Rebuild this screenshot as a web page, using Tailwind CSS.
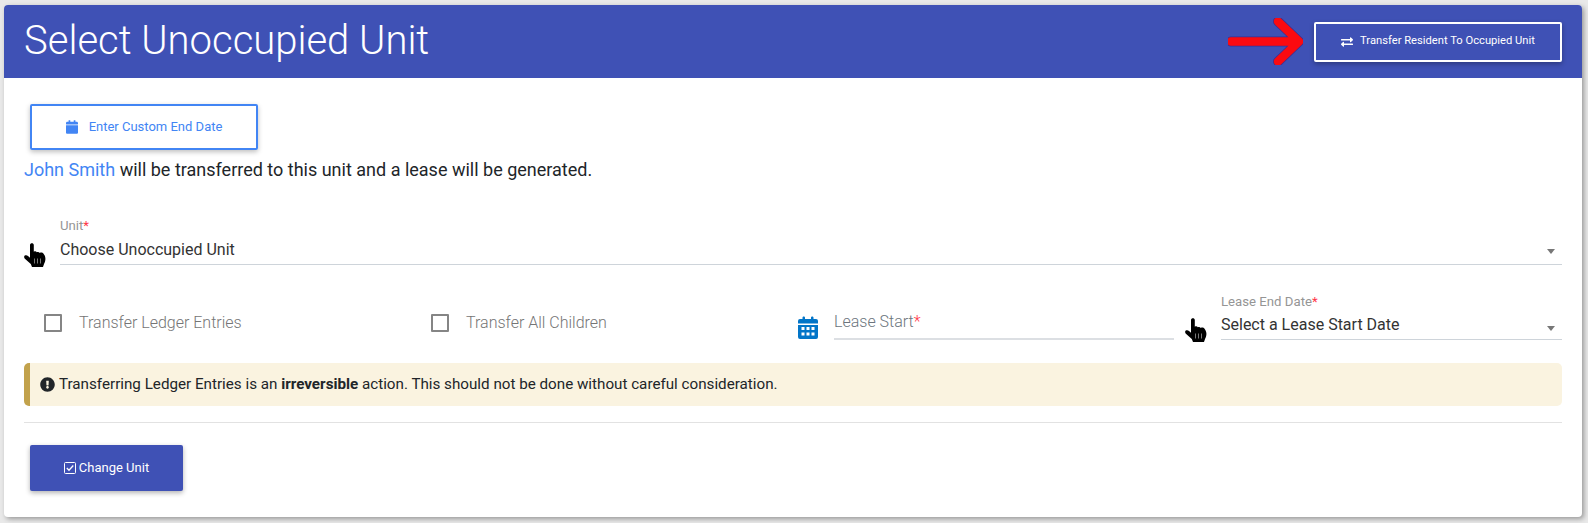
<!DOCTYPE html>
<html lang="en">
<head>
  <meta charset="UTF-8">
  <title>Select Unoccupied Unit</title>
  <script src="https://cdn.jsdelivr.net/npm/@tailwindcss/browser@4"></script>
</head>
<body class="bg-[#e9e9e9] h-[523px] overflow-hidden pt-[5px] pl-1 font-['Roboto',sans-serif]">
  <div class="w-[1578px] h-[512px] bg-white rounded-[4px] shadow-[2px_2px_5px_rgba(0,0,0,0.35)] overflow-hidden">
    <!-- header -->
    <header class="h-[73px] bg-[#3f51b5] flex items-center pl-5 pr-5 text-white">
      <h1 class="text-[40px] font-light leading-none -mt-[1px]">Select Unoccupied Unit</h1>
      <svg class="ml-auto mr-[11px]" width="75" height="47" viewBox="0 0 75 47" fill="none">
        <path d="M3 23.5H71M50 3.5L71 23.5L50 43.5" stroke="#3f2f8f" stroke-width="10" stroke-linecap="round" stroke-linejoin="round"/>
        <path d="M3 23.5H71M50 3.5L71 23.5L50 43.5" stroke="#fb0a10" stroke-width="8.5" stroke-linecap="round" stroke-linejoin="round"/>
      </svg>
      <button class="w-[248px] h-[40px] border-2 border-white rounded-[2px] flex items-center justify-center gap-[7px] text-[11.2px] shadow-[0_2px_5px_rgba(0,0,0,0.3)]">
        <svg class="w-3 h-3" viewBox="0 0 512 512" fill="#fff"><path d="M0 168v-16c0-13.255 10.745-24 24-24h360V80c0-21.367 25.899-32.042 40.971-16.971l80 80c9.372 9.373 9.372 24.569 0 33.941l-80 80C409.956 271.982 384 261.456 384 240v-48H24c-13.255 0-24-10.745-24-24zm488 152H128v-48c0-21.314-25.862-32.08-40.971-16.971l-80 80c-9.372 9.373-9.372 24.569 0 33.941l80 80C102.057 463.997 128 453.437 128 432v-48h360c13.255 0 24-10.745 24-24v-16c0-13.255-10.745-24-24-24z"/></svg>
        Transfer Resident To Occupied Unit
      </button>
    </header>

    <div class="px-5 pt-[26px]">
      <button class="ml-[6px] w-[228px] h-[46px] border-2 border-[#4285f4] rounded-[2px] flex items-center justify-center gap-[11px] text-[13px] text-[#4285f4] shadow-[0_2px_5px_rgba(0,0,0,0.25)]">
        <svg class="w-3 h-[14px]" viewBox="0 0 448 512" fill="#4285f4"><path d="M12 192h424c6.6 0 12 5.4 12 12v260c0 26.5-21.5 48-48 48H48c-26.5 0-48-21.5-48-48V204c0-6.6 5.4-12 12-12zm436-44v-36c0-26.5-21.5-48-48-48h-48V12c0-6.6-5.4-12-12-12h-40c-6.6 0-12 5.4-12 12v52H160V12c0-6.6-5.4-12-12-12h-40c-6.6 0-12 5.4-12 12v52H48C21.5 64 0 85.5 0 112v36c0 6.6 5.4 12 12 12h424c6.6 0 12-5.4 12-12z"/></svg>
        Enter Custom End Date
      </button>
      <p class="mt-[6px] text-[18px] leading-[27px] text-[#212529]"><span class="text-[#4285f4]">John Smith</span> will be transferred to this unit and a lease will be generated.</p>

      <!-- unit select -->
      <div class="mt-[36px] flex items-end">
        <svg class="ml-[0px] w-[22px] h-[24px] -mb-[2px] shrink-0" viewBox="0 0 22 24"><path d="M6 2c0-2.300 3.800-2.300 3.800 0v6.700c1.200-.7 2.400-.4 3 .5 1.100-.6 2.400-.3 3 .7 1.300-.6 3-.2 3.900 1 1 1.300 1.600 2.900 1.700 4.600.1 2.100-.5 3.700-1.300 5.200L19 24H8l-1.200-3L.9 15.700c-1-1-1-2.400-.1-3.100.9-.7 2.300-.4 3.200.4l2 1.800z" fill="#000"/><path d="M10.500 15.500v5M13.500 15.500v5M16.500 15.500v5" stroke="#777" stroke-width="1"/></svg>
        <div class="ml-[14px] flex-1 border-b border-[#ced4da] pb-[5px] relative">
          <div class="text-[13.2px] leading-[14px] text-[#959595]">Unit<span class="text-[#ff3547]">*</span></div>
          <div class="mt-[7px] text-[16px] leading-[19px] text-[#333]">Choose Unoccupied Unit</div>
          <span class="absolute right-[7px] bottom-[10px] w-0 h-0 border-x-[4px] border-x-transparent border-t-[5px] border-t-[#777]"></span>
        </div>
      </div>

      <!-- options row -->
      <div class="mt-[23px] flex items-end h-[51px]">
        <label class="w-[387px] flex items-center pl-[20px] gap-[17px] text-[16px] font-light text-[#757575] h-[33px] self-end">
          <span class="w-[18px] h-[18px] border-2 border-[#858585] rounded-[1px]"></span>Transfer Ledger Entries
        </label>
        <label class="w-[387px] flex items-center pl-[20px] gap-[17px] text-[16px] font-light text-[#757575] h-[33px] self-end">
          <span class="w-[18px] h-[18px] border-2 border-[#858585] rounded-[1px]"></span>Transfer All Children
        </label>
        <svg class="w-[20px] h-[23px] mb-0 shrink-0" viewBox="0 0 20 23"><path d="M2 3h2.500V1.500c0-1.500 2.500-1.500 2.500 0V3h6V1.500c0-1.500 2.500-1.500 2.500 0V3H18a2 2 0 0 1 2 2v2.500H0V5a2 2 0 0 1 2-2zM0 9h20v12a2 2 0 0 1-2 2H2a2 2 0 0 1-2-2z" fill="#0275c8"/><path d="M3.500 11h3v3h-3zM8.500 11h3v3h-3zM13.500 11h3v3h-3zM3.500 16.500h3v3h-3zM8.500 16.500h3v3h-3zM13.500 16.500h3v3h-3z" fill="#fff"/></svg>
        <div class="ml-4 w-[340px] border-b-2 border-[#dcdfe3] pb-[7px] -mb-[1px] text-[16px] leading-[19px] font-light text-[#6c757d]">Lease Start<span class="text-[#ff3547]">*</span></div>
        <svg class="ml-[11px] w-[22px] h-[24px] -mb-[3px] shrink-0" viewBox="0 0 22 24"><path d="M6 2c0-2.300 3.800-2.300 3.800 0v6.700c1.200-.7 2.400-.4 3 .5 1.100-.6 2.400-.3 3 .7 1.300-.6 3-.2 3.900 1 1 1.300 1.600 2.900 1.700 4.600.1 2.100-.5 3.700-1.300 5.200L19 24H8l-1.200-3L.9 15.700c-1-1-1-2.400-.1-3.100.9-.7 2.300-.4 3.200.4l2 1.800z" fill="#000"/><path d="M10.500 15.500v5M13.500 15.500v5M16.500 15.500v5" stroke="#777" stroke-width="1"/></svg>
        <div class="ml-[14px] flex-1 border-b border-[#ced4da] pb-[5px] relative -mb-[1px]">
          <div class="text-[13.2px] leading-[14px] text-[#959595]">Lease End Date<span class="text-[#ff3547]">*</span></div>
          <div class="mt-[6px] text-[16px] leading-[19px] text-[#333]">Select a Lease Start Date</div>
          <span class="absolute right-[7px] bottom-[8px] w-0 h-0 border-x-[4px] border-x-transparent border-t-[5px] border-t-[#777]"></span>
        </div>
      </div>

      <!-- warning -->
      <div class="mt-[24px] h-[43px] bg-[#faf3e0] border-l-[6px] border-[#c2a24c] rounded-[5px] flex items-center pl-[10px] gap-[4px] text-[15.2px] text-[#212529]">
        <svg class="w-[15px] h-[15px]" viewBox="0 0 512 512" fill="#212529"><path d="M504 256c0 136.997-111.043 248-248 248S8 392.997 8 256C8 119.083 119.043 8 256 8s248 111.083 248 248zm-248 50c-25.405 0-46 20.595-46 46s20.595 46 46 46 46-20.595 46-46-20.595-46-46-46zm-43.673-165.346l7.418 136c.347 6.364 5.609 11.346 11.982 11.346h48.546c6.373 0 11.635-4.982 11.982-11.346l7.418-136c.375-6.874-5.098-12.654-11.982-12.654h-63.383c-6.884 0-12.356 5.780-11.981 12.654z"/></svg>
        <span>Transferring Ledger Entries is an <b class="font-bold">irreversible</b> action. This should not be done without careful consideration.</span>
      </div>
      <hr class="mt-4 border-t border-[#e2e2e2]">

      <button class="mt-[22px] ml-[6px] w-[153px] h-[46px] bg-[#3f51b5] rounded-[2px] flex items-center justify-center gap-[3px] text-[13px] text-white shadow-[0_2px_5px_rgba(0,0,0,0.3)]">
        <svg class="w-3 h-3" viewBox="0 0 12 12" fill="none" stroke="#fff" stroke-width="1"><rect x="0.500" y="0.500" width="11" height="11" rx="1"/><path d="M2.800 6L5 8.200L9.300 3.500" stroke-width="1.300"/></svg>
        Change Unit
      </button>
    </div>
  </div>
</body>
</html>
